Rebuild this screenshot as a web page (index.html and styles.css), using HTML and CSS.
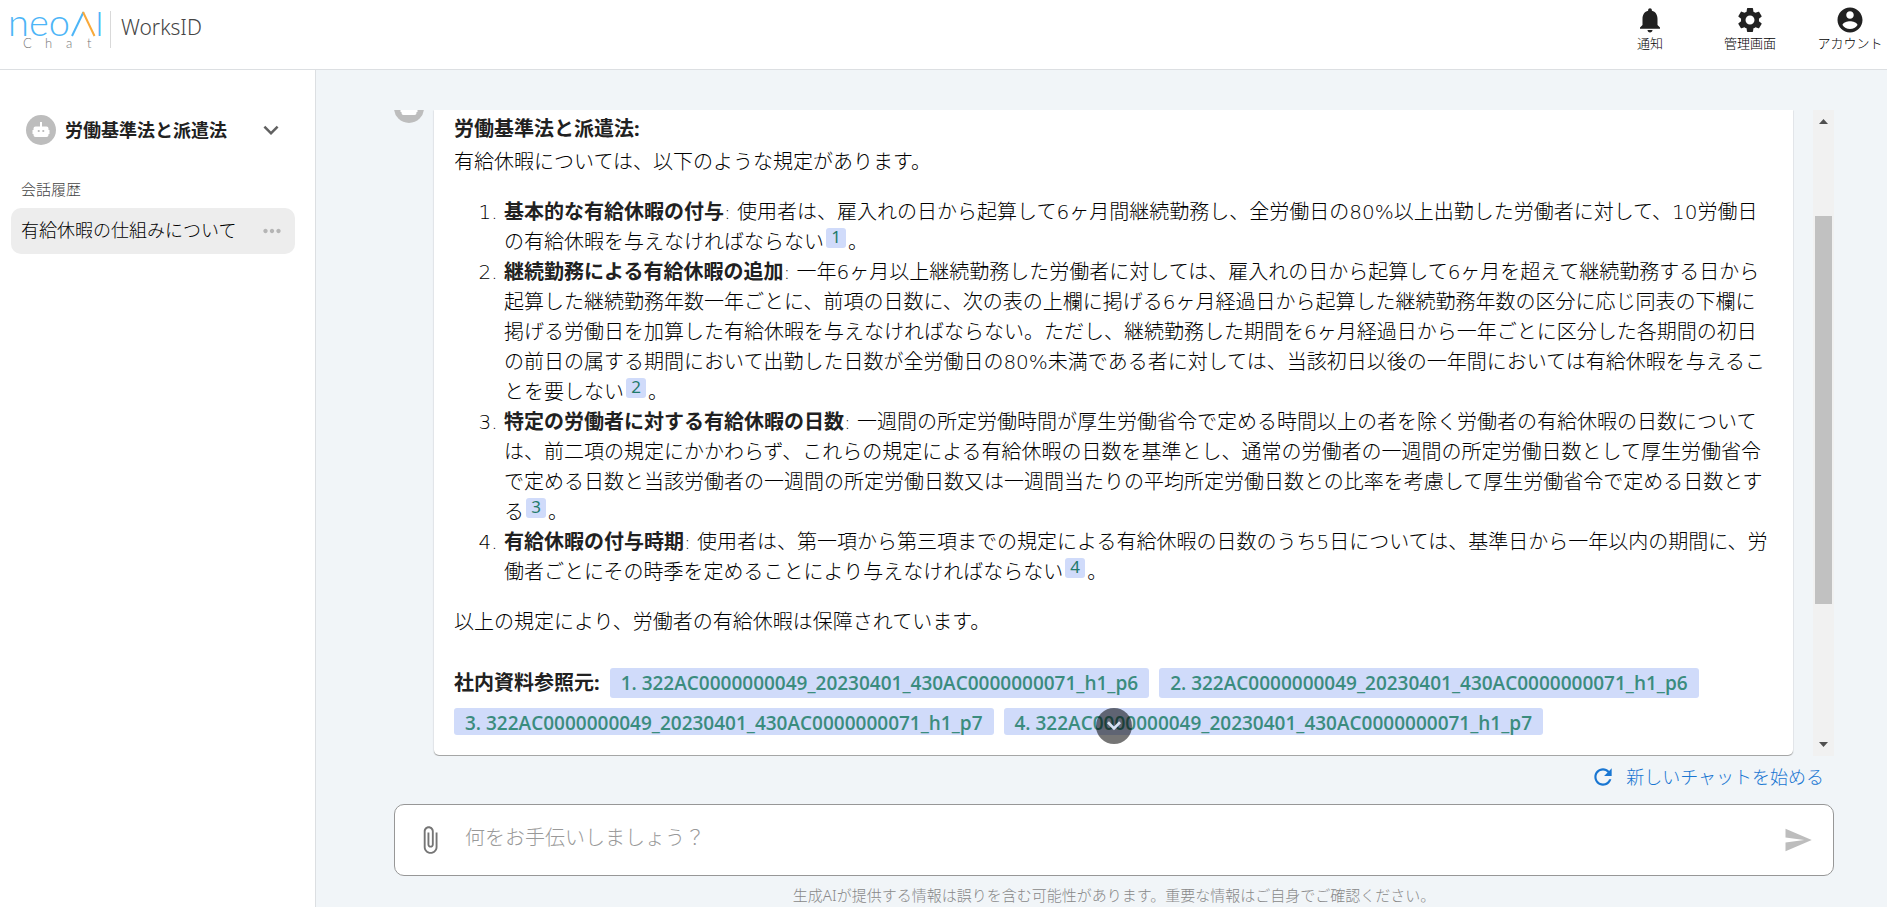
FILE: index.html
```html
<!DOCTYPE html>
<html lang="ja">
<head>
<meta charset="utf-8">
<meta name="viewport" content="width=device-width, initial-scale=1">
<title>neoAI Chat</title>
<link rel="stylesheet" href="styles.css">
</head>
<body>
<div class="app">
  <header class="header">
    <svg class="logo" width="96" height="50" viewBox="0 0 96 50" role="img" aria-label="neoAI Chat">
      <text class="logo-name" x="-3" y="36">neo</text>
      <path d="M61 36L72.500 12" stroke="#4db5f7" stroke-width="2" fill="none"/>
      <path d="M72 12L83.500 36" stroke="#f9a93a" stroke-width="2" fill="none"/>
      <text class="logo-name logo-cap" x="84" y="36">I</text>
      <text class="logo-sub" x="12 34 55 76" y="48">Chat</text>
    </svg>
    <span class="tenant">WorksID</span>
    <nav class="header-nav">
      <button class="nav-button" type="button">
        <svg class="icon-l" viewBox="0 0 24 24"><path d="M12 22c1.100 0 2-.9 2-2h-4c0 1.100.89 2 2 2zm6-6v-5c0-3.070-1.640-5.640-4.500-6.320V4c0-.83-.67-1.500-1.500-1.500s-1.500.67-1.500 1.500v.68C7.630 5.360 6 7.920 6 11v5l-2 2v1h16v-1l-2-2z"/></svg>
        <span>通知</span>
      </button>
      <button class="nav-button" type="button">
        <svg class="icon-l" viewBox="0 0 24 24"><path d="M19.140 12.940c.04-.3.060-.61.060-.94 0-.32-.02-.64-.07-.94l2.030-1.580c.18-.14.230-.41.120-.61l-1.920-3.320c-.12-.22-.37-.29-.59-.22l-2.390.96c-.5-.38-1.030-.7-1.620-.94l-.36-2.540c-.04-.24-.24-.41-.48-.41h-3.840c-.24 0-.43.170-.47.410l-.36 2.540c-.59.240-1.130.57-1.620.94l-2.390-.96c-.22-.08-.47 0-.59.220L2.740 8.870c-.12.210-.08.470.12.610l2.030 1.580c-.05.3-.09.630-.09.940s.02.640.07.940l-2.030 1.580c-.18.140-.23.410-.12.610l1.920 3.320c.12.220.37.290.59.220l2.390-.96c.5.380 1.030.7 1.620.94l.36 2.540c.05.240.24.410.48.410h3.840c.24 0 .44-.17.470-.41l.36-2.540c.59-.24 1.130-.56 1.620-.94l2.390.96c.22.080.47 0 .59-.22l1.920-3.320c.12-.22.070-.47-.12-.61l-2.010-1.580zM12 15.600c-1.980 0-3.600-1.620-3.600-3.600s1.620-3.600 3.600-3.600 3.600 1.620 3.600 3.600-1.620 3.600-3.600 3.600z"/></svg>
        <span>管理画面</span>
      </button>
      <button class="nav-button" type="button">
        <svg class="icon-l" viewBox="0 0 24 24"><path d="M12 2C6.480 2 2 6.480 2 12s4.480 10 10 10 10-4.480 10-10S17.520 2 12 2zm0 3c1.660 0 3 1.340 3 3s-1.340 3-3 3-3-1.340-3-3 1.340-3 3-3zm0 14.200c-2.500 0-4.710-1.280-6-3.220.03-1.990 4-3.080 6-3.080 1.990 0 5.970 1.090 6 3.080-1.290 1.940-3.500 3.220-6 3.220z"/></svg>
        <span>アカウント</span>
      </button>
    </nav>
  </header>

  <div class="body">
    <aside class="sidebar">
      <button class="assistant" type="button">
        <span class="avatar"><svg class="icon-l" viewBox="0 0 30 30"><path fill-rule="evenodd" d="M14 7h2v4.500h4.500a2 2 0 0 1 2 2v1.500h1v4h-1v1a2 2 0 0 1-2 2h-11a2 2 0 0 1-2-2v-1h-1v-4h1v-1.500a2 2 0 0 1 2-2H14zM11.800 15v2h1.800v-2zM16.400 15v2h1.800v-2z"/></svg></span>
        <span class="assistant-name">労働基準法と派遣法</span>
        <svg class="icon-l chevron" viewBox="0 0 24 24"><path d="M16.590 8.590L12 13.170 7.410 8.590 6 10l6 6 6-6z"/></svg>
      </button>
      <h2 class="history-title">会話履歴</h2>
      <div class="history-item">
        <a class="history-link" href="#">有給休暇の仕組みについて</a>
        <button class="more" type="button" aria-label="メニュー"><svg class="icon-m" viewBox="0 0 24 24"><path d="M6 10c-1.100 0-2 .9-2 2s.9 2 2 2 2-.9 2-2-.9-2-2-2zm12 0c-1.100 0-2 .9-2 2s.9 2 2 2 2-.9 2-2-.9-2-2-2zm-6 0c-1.100 0-2 .9-2 2s.9 2 2 2 2-.9 2-2-.9-2-2-2z"/></svg></button>
      </div>
    </aside>

    <main class="main">
      <div class="thread">
        <div class="message">
          <span class="avatar avatar-scrolled"><svg class="icon-l" viewBox="0 0 30 30"><path d="M14 7h2v4.500h4.500a2 2 0 0 1 2 2v1.500h1v4h-1v1a2 2 0 0 1-2 2h-11a2 2 0 0 1-2-2v-1h-1v-4h1v-1.500a2 2 0 0 1 2-2H14z"/></svg></span>
          <article class="card">
            <h1 class="card-title">労働基準法と派遣法:</h1>
            <p class="text">有給休暇については、以下のような規定があります。</p>
            <ol class="rules">
              <li><strong>基本的な有給休暇の付与</strong>: 使用者は、雇入れの日から起算して6ヶ月間継続勤務し、全労働日の80%以上出勤した労働者に対して、10労働日の有給休暇を与えなければならない<a class="cite" href="#s1">1</a>。</li>
              <li><strong>継続勤務による有給休暇の追加</strong>: 一年6ヶ月以上継続勤務した労働者に対しては、雇入れの日から起算して6ヶ月を超えて継続勤務する日から起算した継続勤務年数一年ごとに、前項の日数に、次の表の上欄に掲げる6ヶ月経過日から起算した継続勤務年数の区分に応じ同表の下欄に掲げる労働日を加算した有給休暇を与えなければならない。ただし、継続勤務した期間を6ヶ月経過日から一年ごとに区分した各期間の初日の前日の属する期間において出勤した日数が全労働日の80%未満である者に対しては、当該初日以後の一年間においては有給休暇を与えることを要しない<a class="cite" href="#s2">2</a>。</li>
              <li><strong>特定の労働者に対する有給休暇の日数</strong>: 一週間の所定労働時間が厚生労働省令で定める時間以上の者を除く労働者の有給休暇の日数については、前二項の規定にかかわらず、これらの規定による有給休暇の日数を基準とし、通常の労働者の一週間の所定労働日数として厚生労働省令で定める日数と当該労働者の一週間の所定労働日数又は一週間当たりの平均所定労働日数との比率を考慮して厚生労働省令で定める日数とする<a class="cite" href="#s3">3</a>。</li>
              <li><strong>有給休暇の付与時期</strong>: 使用者は、第一項から第三項までの規定による有給休暇の日数のうち5日については、基準日から一年以内の期間に、労働者ごとにその時季を定めることにより与えなければならない<a class="cite" href="#s4">4</a>。</li>
            </ol>
            <p class="text">以上の規定により、労働者の有給休暇は保障されています。</p>
            <div class="sources">
              <strong>社内資料参照元:</strong>
              <a class="chip" id="s1" href="#">1. 322AC0000000049_20230401_430AC0000000071_h1_p6</a>
              <a class="chip" id="s2" href="#">2. 322AC0000000049_20230401_430AC0000000071_h1_p6</a>
              <a class="chip chip-short" id="s3" href="#">3. 322AC0000000049_20230401_430AC0000000071_h1_p7</a>
              <a class="chip chip-short" id="s4" href="#">4. 322AC0000000049_20230401_430AC0000000071_h1_p7</a>
            </div>
          </article>
        </div>
        <div class="scrollbar">
          <svg class="arrow" width="21" height="21" viewBox="0 0 21 21"><path d="M6 14h9l-4.500-5z"/></svg>
          <div class="track"><div class="thumb"></div></div>
          <svg class="arrow" width="21" height="21" viewBox="0 0 21 21"><path d="M6 7h9l-4.500 5z"/></svg>
        </div>
        <button class="jump" type="button" aria-label="最新へ移動"><svg class="icon-m" viewBox="0 0 24 24"><path d="M12 16L5.500 9.500l1.800-1.800 4.700 4.700 4.700-4.700L18.500 9.500z"/></svg></button>
      </div>

      <div class="actions">
        <button class="new-chat" type="button">
          <svg class="icon-m" viewBox="0 0 24 24"><path d="M17.650 6.350C16.200 4.900 14.210 4 12 4c-4.420 0-7.990 3.580-7.990 8s3.570 8 7.990 8c3.730 0 6.840-2.550 7.730-6h-2.080c-.82 2.330-3.040 4-5.650 4-3.310 0-6-2.690-6-6s2.690-6 6-6c1.660 0 3.140.69 4.220 1.780L13 11h7V4l-2.350 2.350z"/></svg>
          <span>新しいチャットを始める</span>
        </button>
      </div>

      <form class="composer">
        <button class="tool attach" type="button" aria-label="ファイルを添付"><svg class="icon-l" viewBox="0 0 24 24"><path d="M16.500 6v11.500c0 2.210-1.790 4-4 4s-4-1.790-4-4V5c0-1.380 1.120-2.500 2.500-2.500s2.500 1.120 2.500 2.500v10.500c0 .55-.45 1-1 1s-1-.45-1-1V6H10v9.500c0 1.380 1.120 2.500 2.500 2.500s2.500-1.120 2.500-2.500V5c0-2.210-1.790-4-4-4S7 2.790 7 5v12.500c0 3.040 2.460 5.500 5.500 5.500s5.500-2.460 5.500-5.500V6h-1.500z"/></svg></button>
        <input class="prompt" type="text" aria-label="メッセージ" placeholder="何をお手伝いしましょう？">
        <button class="tool send" type="button" aria-label="送信"><svg class="icon-l" viewBox="0 0 24 24"><path d="M2.010 21L23 12 2.010 3 2 10l15 2-15 2z"/></svg></button>
      </form>
      <p class="notice">生成AIが提供する情報は誤りを含む可能性があります。重要な情報はご自身でご確認ください。</p>
    </main>
  </div>
</div>
</body>
</html>
```
FILE: styles.css
```css
* { box-sizing: border-box; }

body {
  margin: 0;
  color: #000;
  background: #f1f5f8;
  font-family: "Noto Sans", "Noto Sans CJK JP", sans-serif;
  font-size: 20px;
  font-weight: 300;
  line-height: 30px;
}

button, input { font: inherit; color: inherit; }
button { border: 0; padding: 0; background: none; cursor: pointer; }
a { text-decoration: none; }
h1, h2, p, ol { margin: 0; }
svg { fill: currentColor; flex: none; }
strong { color: #212121; font-weight: 700; }

.icon-m { width: 26px; height: 26px; }
.icon-l { width: 30px; height: 30px; }

.app { display: flex; flex-direction: column; height: 100vh; overflow: hidden; }

.header {
  display: flex;
  flex: none;
  align-items: flex-start;
  height: 70px;
  padding: 0 1px 0 11px;
  background: #fff;
  border-bottom: 1px solid #dcdfe2;
}
.logo { overflow: visible; }
.logo-name { fill: #4db5f7; font-family: Lato, sans-serif; font-size: 38px; font-weight: 300; }
.logo-cap { font-size: 34px; }
.logo-sub { fill: #777; font-family: Lato, sans-serif; font-size: 13px; font-weight: 300; }
.tenant {
  height: 37px;
  margin: 11px 0 0 3px;
  padding-left: 10px;
  border-left: 1px solid #d9d9d9;
  color: #444;
  font-size: 21px;
  line-height: 33px;
}
.header-nav { display: flex; gap: 28px; margin-left: auto; padding-top: 5px; }
.nav-button {
  display: flex;
  flex-direction: column;
  align-items: center;
  width: 72px;
  font-size: 13px;
  line-height: 17px;
  white-space: nowrap;
}
.nav-button svg { color: #212121; }

.body { display: flex; flex: 1; min-height: 0; }

.sidebar {
  flex: none;
  width: 316px;
  padding: 45px 20px 0 11px;
  background: #fff;
  border-right: 1px solid #dcdfe2;
}
.assistant { display: flex; align-items: center; width: 100%; padding: 0 9px 0 15px; text-align: left; }
.assistant-name { flex: 1; margin-left: 9px; color: #212121; font-size: 18px; font-weight: 700; }
.chevron { color: #616161; }
.avatar {
  display: flex;
  flex: none;
  align-items: center;
  justify-content: center;
  width: 30px;
  height: 30px;
  border-radius: 50%;
  color: #fff;
  background: #bdbdbd;
}
.history-title { margin: 34px 0 8px 10px; color: #444; font-size: 15px; font-weight: 300; line-height: 21px; }
.history-item {
  display: flex;
  align-items: center;
  justify-content: space-between;
  height: 46px;
  padding: 0 10px;
  border-radius: 10px;
  background: #ededed;
}
.history-link { padding-bottom: 2px; color: #000; font-size: 18px; }
.more { display: flex; color: #b5b5b5; }

.main {
  display: flex;
  flex: 1;
  flex-direction: column;
  min-width: 0;
  padding: 40px 53px 0 78px;
}
.thread { position: relative; display: flex; flex: 1; gap: 19px; min-height: 0; }
.message { display: flex; flex: 1; gap: 10px; min-width: 0; overflow: hidden; padding-right: 1px; }
.avatar-scrolled { margin-top: -17px; }
.card {
  flex: 1;
  align-self: flex-start;
  min-width: 0;
  padding: 4px 20px 20px;
  border-radius: 0 0 5px 5px;
  background: #fff;
  box-shadow: 0 1px 1px #9e9e9e, 0 0 2px #d5d8dc;
}
.card-title { margin-bottom: 3px; color: #212121; font-size: 20px; font-weight: 700; }
.rules {
  margin: 20px 0;
  padding-left: 50px;
  font-family: "DejaVu Sans", "Noto Sans CJK JP", sans-serif;
}
.cite {
  display: inline-block;
  width: 20px;
  height: 20px;
  margin: 0 2px;
  border-radius: 3px;
  color: #1f7a6b;
  background: #d0dbfa;
  font-family: "Noto Sans", sans-serif;
  font-size: 17px;
  font-weight: 400;
  line-height: 18px;
  text-align: center;
  vertical-align: 6px;
}
.sources { display: flex; flex-wrap: wrap; gap: 10px; margin-top: 31px; }
.chip {
  height: 30px;
  padding: 0 11px;
  border-radius: 3px;
  color: #3b8c7e;
  background: #d0dbfa;
  font-family: "Open Sans", sans-serif;
  font-size: 19px;
  font-weight: 600;
}
.chip-short { height: 27px; }

.scrollbar { display: flex; flex: none; flex-direction: column; width: 21px; background: #f1f1f1; }
.arrow { color: #505050; }
.track { flex: 1; padding: 85px 2px 0; }
.thumb { height: 388px; background: #c1c1c1; }

.jump {
  position: absolute;
  left: 50%;
  bottom: 12px;
  display: flex;
  align-items: center;
  justify-content: center;
  width: 36px;
  height: 36px;
  margin-left: -18px;
  border-radius: 50%;
  color: #d5e3f5;
  background: rgba(0, 0, 0, 0.54);
}

.actions { display: flex; justify-content: flex-end; padding: 6px 10px 12px; }
.new-chat { display: flex; align-items: center; gap: 10px; color: #1976d2; font-size: 18px; }
.composer {
  display: flex;
  align-items: center;
  height: 72px;
  padding: 0 20px;
  border: 1px solid #979797;
  border-radius: 10px;
  background: #fff;
}
.tool { display: flex; }
.attach { color: #757575; }
.send { color: #bdbdbd; }
.prompt { flex: 1; min-width: 0; padding: 0 20px 4px; border: 0; outline: 0; background: none; }
.prompt::placeholder { color: #999; opacity: 1; }
.notice { padding: 8px 0 1px; color: #888; font-size: 15px; line-height: 22px; text-align: center; }
```
